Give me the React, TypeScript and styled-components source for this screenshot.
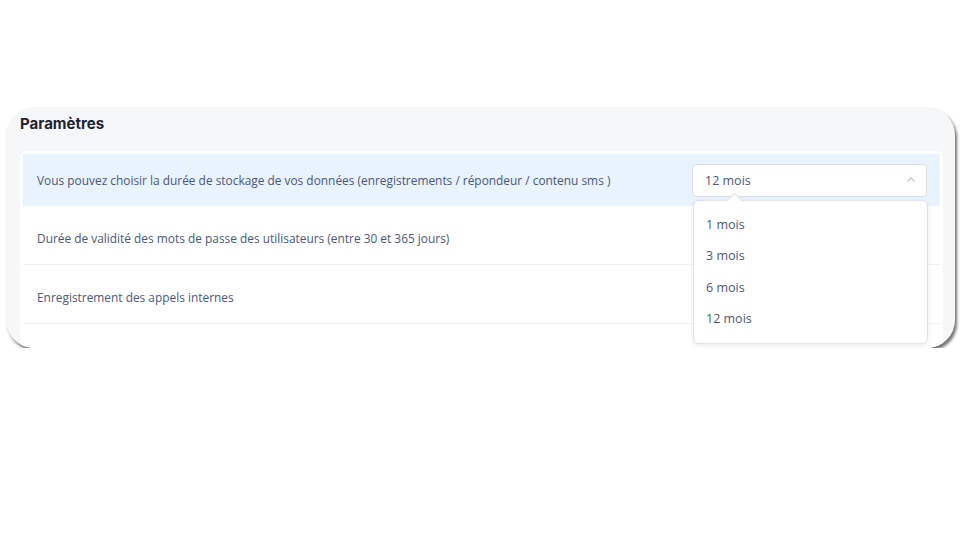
import React from 'react';
import styled, { createGlobalStyle } from 'styled-components';

const Global = createGlobalStyle`
  body { margin: 0; background: #fff; font-family: "Open Sans", sans-serif; }
`;

const Page = styled.div`
  padding: 107px 5px 0 6px;
`;

const Card = styled.section`
  width: 949px;
  height: 241px;
  box-sizing: border-box;
  background: #f6f7f9;
  border-radius: 28px;
  box-shadow: 2px 3px 3px rgba(0, 0, 0, 0.55);
  padding: 4px 12px 0 14px;
  overflow: hidden;
`;

const Title = styled.h2`
  margin: 0 0 14px;
  font-family: Inter, sans-serif;
  font-weight: 700;
  font-size: 15px;
  line-height: 26px;
  color: #1f2330;
`;

const List = styled.div`
  background: #fff;
  border-radius: 6px;
  padding: 3px;
  display: flex;
  flex-direction: column;
`;

const Row = styled.div<{ $active?: boolean }>`
  position: relative;
  height: 52px;
  margin-bottom: 6px;
  display: flex;
  align-items: center;
  justify-content: space-between;
  padding: 0 13px 0 14px;
  background: ${(p) => (p.$active ? '#e8f3fd' : '#fff')};
  border-bottom: ${(p) => (p.$active ? 'none' : '1px solid #f1f2f5')};
`;

const Label = styled.span`
  font-size: 11.9px;
  color: #4b5878;
`;

const Select = styled.div`
  position: relative;
  width: 235px;
  height: 33px;
  box-sizing: border-box;
  background: #fff;
  border: 1px solid #d9dde4;
  border-radius: 4px;
  display: flex;
  align-items: center;
  justify-content: space-between;
  padding: 0 10px 0 12px;
  font-size: 12.5px;
  color: #4b5878;
`;

const Menu = styled.div`
  position: absolute;
  top: 35px;
  left: 0;
  width: 235px;
  box-sizing: border-box;
  background: #fff;
  border: 1px solid #dfe2e8;
  border-radius: 6px;
  box-shadow: 0 2px 6px rgba(0, 0, 0, 0.08);
  padding: 8px 0 8px;
  z-index: 2;
  &::before {
    content: '';
    position: absolute;
    top: -6px;
    left: 35px;
    width: 10px;
    height: 10px;
    background: #fff;
    border-left: 1px solid #dfe2e8;
    border-top: 1px solid #dfe2e8;
    transform: rotate(45deg);
  }
`;

const Option = styled.div`
  height: 31.5px;
  display: flex;
  align-items: center;
  padding: 0 12px;
  font-size: 12.5px;
  color: #4b5878;
`;

const Chevron = () => (
  <svg width="10" height="10" viewBox="0 0 10 10" fill="none">
    <path d="M1.5 6.5 5 3l3.5 3.5" stroke="#c4c9d2" strokeWidth="1.3" />
  </svg>
);

const options = ['1 mois', '3 mois', '6 mois', '12 mois'];

export default function App() {
  return (
    <Page>
      <Global />
      <Card>
        <Title>Paramètres</Title>
        <List>
          <Row $active style={{ zIndex: 2 }}>
            <Label>
              Vous pouvez choisir la durée de stockage de vos données (enregistrements / répondeur / contenu sms )
            </Label>
            <Select>
              12 mois
              <Chevron />
              <Menu>
                {options.map((o) => (
                  <Option key={o}>{o}</Option>
                ))}
              </Menu>
            </Select>
          </Row>
          <Row>
            <Label>Durée de validité des mots de passe des utilisateurs (entre 30 et 365 jours)</Label>
          </Row>
          <Row>
            <Label>Enregistrement des appels internes</Label>
          </Row>
          <Row>
            <Label>&nbsp;</Label>
          </Row>
        </List>
      </Card>
    </Page>
  );
}
